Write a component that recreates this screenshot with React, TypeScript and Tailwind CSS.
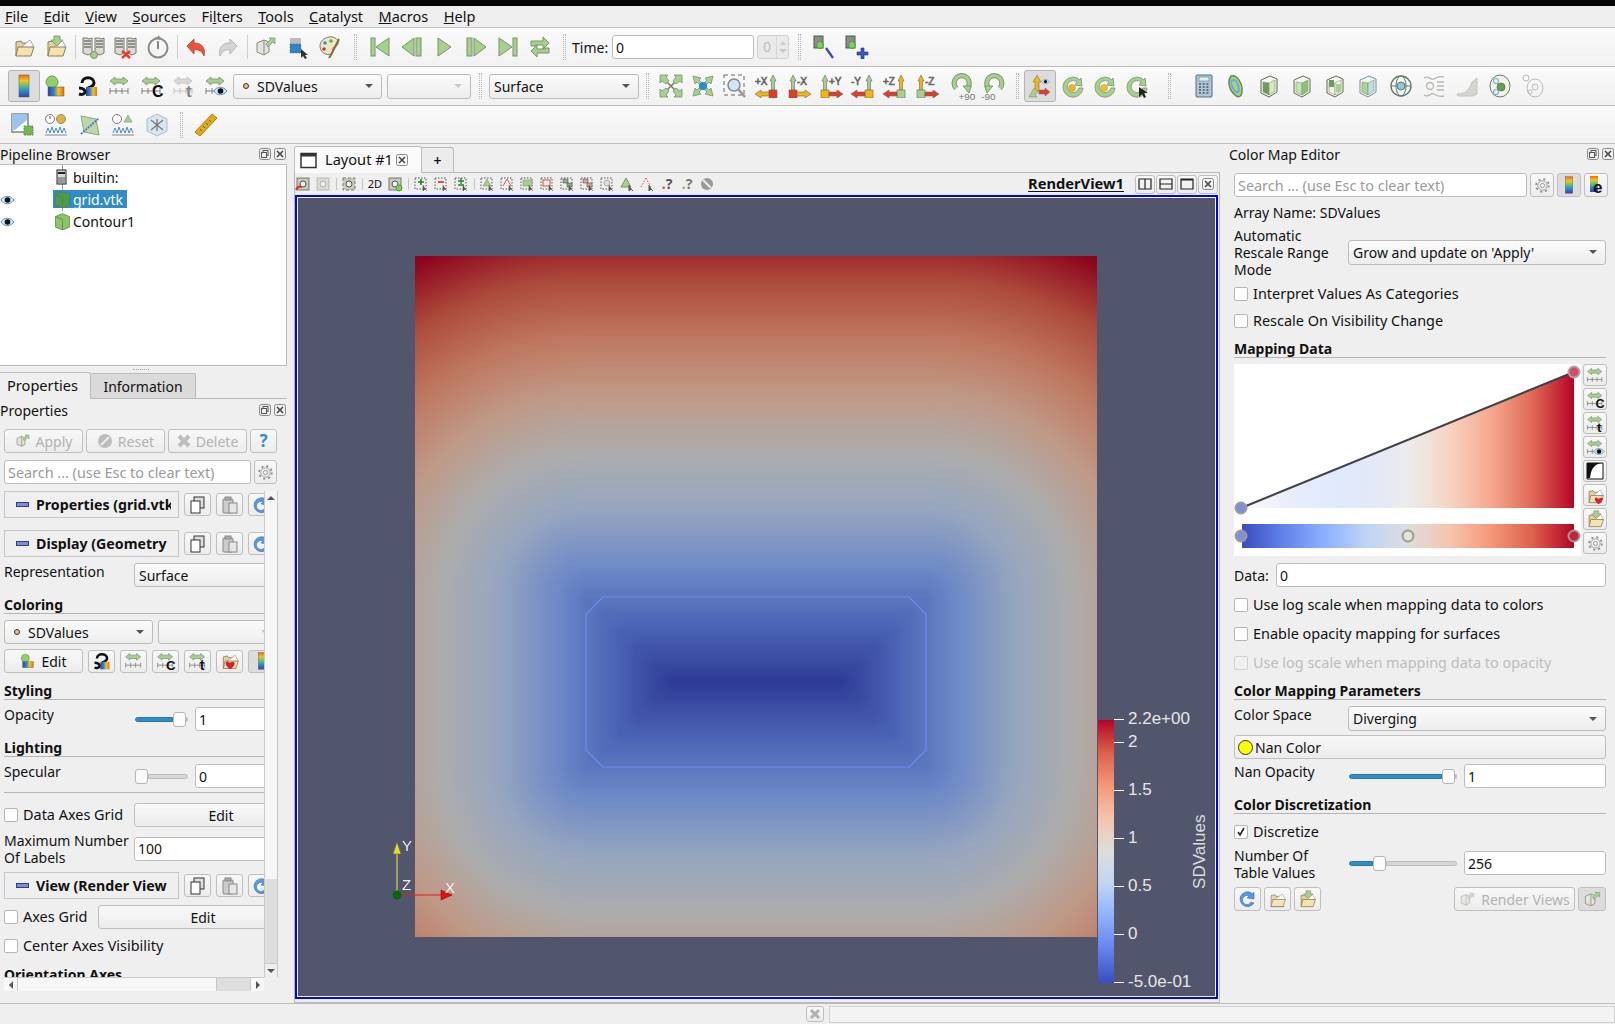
import { useEffect, useRef } from 'react'
import type { ReactNode } from 'react'

const GRN = '#a7d08f'
const GRD = '#76936a'
const ORG = '#f6b40e'
const RED = '#e23c27'
const GRY = '#8b8b82'

const coolwarm: [number, number, number, number][] = [
  [0, 59, 76, 192],
  [0.125, 98, 130, 234],
  [0.25, 141, 176, 254],
  [0.375, 192, 212, 245],
  [0.5, 221, 221, 221],
  [0.625, 245, 196, 173],
  [0.75, 244, 152, 122],
  [0.875, 221, 96, 76],
  [1, 180, 4, 38],
]

function mapColor(v: number) {
  const t = Math.min(1, Math.max(0, (v + 0.5) / 2.7))
  let i = 0
  while (i < coolwarm.length - 2 && t > coolwarm[i + 1][0]) i++
  const a = coolwarm[i]
  const b = coolwarm[i + 1]
  const f = (t - a[0]) / (b[0] - a[0])
  return [a[1] + (b[1] - a[1]) * f, a[2] + (b[2] - a[2]) * f, a[3] + (b[3] - a[3]) * f]
}

function field(x: number, y: number) {
  const qx = Math.abs(x - 2) - 1
  const qy = Math.abs(y - 1.5) - 0.5
  return Math.hypot(Math.max(qx, 0), Math.max(qy, 0)) + Math.min(Math.max(qx, qy), 0)
}

function Heatmap() {
  const ref = useRef<HTMLCanvasElement>(null)
  useEffect(() => {
    const ctx = ref.current?.getContext('2d')
    if (!ctx) return
    const w = 682
    const h = 681
    const img = ctx.createImageData(w, h)
    for (let py = 0; py < h; py++) {
      for (let px = 0; px < w; px++) {
        // bilinear over the 0.1 grid, the data is a coarse vtk grid
        const gx = (px / w) * 40
        const gy = ((h - py) / h) * 40
        const ix = Math.floor(gx)
        const iy = Math.floor(gy)
        const fx = gx - ix
        const fy = gy - iy
        const v =
          field(ix / 10, iy / 10) * (1 - fx) * (1 - fy) +
          field((ix + 1) / 10, iy / 10) * fx * (1 - fy) +
          field(ix / 10, (iy + 1) / 10) * (1 - fx) * fy +
          field((ix + 1) / 10, (iy + 1) / 10) * fx * fy
        const c = mapColor(v)
        const o = (py * w + px) * 4
        img.data[o] = c[0] * 0.78
        img.data[o + 1] = c[1] * 0.78
        img.data[o + 2] = c[2] * 0.78
        img.data[o + 3] = 255
      }
    }
    ctx.putImageData(img, 0, 0)
  }, [])
  return <canvas ref={ref} width={682} height={681} className="absolute left-[117px] top-[58px]" />
}

const Folder = () => (
  <g>
    <path d="M4 21V7l5-1 1 2h7v4" fill="#e6d29c" stroke="#8b7d57" />
    <path d="M7 14 18 5l4 7z" fill="#fff" stroke="#a9a9a0" />
    <path d="M4 21l2-9h16l-3 9z" fill="#f6e2ae" stroke="#8b7d57" />
  </g>
)
const Tower = ({ x }: { x: number }) => (
  <g stroke="#77776f" fill="#dcdcd4">
    <path d={`M${x} 3h4l2 1 3-1v15l-4 2-5-2z`} />
    <path d={`M${x + 1} 6h7M${x + 1} 9h7M${x + 1} 12h7`} fill="none" strokeWidth="1.4" />
  </g>
)
const Ruler = ({ c = '#777' }: { c?: string }) => (
  <path d="M2 17h18M2 14v6M8 14v6M14 14v6M20 14v6" fill="none" stroke={c} strokeWidth="0.9" />
)
const GreenRange = ({ c = GRN, d = GRD }: { c?: string; d?: string }) => (
  <path d="M2 7l5-4v2h8V3l5 4-5 4V9H7v2z" fill={c} stroke={d} strokeWidth="0.8" />
)
const Bar = ({ x, y, w, h }: { x: number; y: number; w: number; h: number }) => (
  <rect x={x} y={y} width={w} height={h} fill="url(#rainbow)" stroke="#555" strokeWidth="0.5" />
)
const Letter = ({ t, x, y, s = 13, c = '#111', b = true }: { t: string; x: number; y: number; s?: number; c?: string; b?: boolean }) => (
  <text x={x} y={y} fontSize={s} fontWeight={b ? 700 : 400} fill={c} fontFamily="'Liberation Sans', sans-serif">
    {t}
  </text>
)
const Eye = () => (
  <g>
    <path d="M1 6c3-5 9-5 13 0-4 5-10 5-13 0z" fill="#cfe4f5" stroke="#5b93c4" />
    <circle cx="7.5" cy="6" r="2.8" fill="#111" />
  </g>
)
const Cube = ({ f = '#a5cf8e', r = '#d3e9c6', s = '#5c6852' }: { f?: string; r?: string; s?: string }) => (
  <g>
    <path d="M4 6l9-4 7 3v13l-8 5-8-4z" fill="#f6f6f0" stroke={s} />
    <path d="M6 8l6 1v12l-6-3z" fill={f} stroke="#7a9a6a" strokeWidth="0.6" />
    <path d="M12 9l6-3v11l-6 4z" fill={r} stroke="#7a9a6a" strokeWidth="0.6" />
  </g>
)
const Rotate = ({ t }: { t: string }) => {
  const plus = t === '+90'
  const arc = plus ? 'M7 14a6.5 6.5 0 1 1 9.5 0' : 'M17 14a6.5 6.5 0 1 0-9.5 0'
  const head = plus ? 'M13 12h7l-2 6z' : 'M11 12H4l2 6z'
  return (
    <g>
      <path d={arc} fill="none" stroke={GRD} strokeWidth="4.4" />
      <path d={arc} fill="none" stroke={GRN} strokeWidth="2.8" />
      <path d={head} fill={GRN} stroke={GRD} strokeWidth="0.8" />
      <Letter t={t} x={plus ? 9 : 1} y={24} s={8.5} c="#777" b={false} />
    </g>
  )
}
const Axis = ({ label, flip, up, block, arrow }: { label: string; flip?: boolean; up: string; block: string; arrow: string }) => {
  const cx = flip ? 6 : 18
  return (
    <g stroke="#666" strokeWidth="0.6">
      <path d={`M${cx} 1l3 6h-1.5v9h-3V7H${cx - 3}z`} fill={up} />
      <rect x={cx - 4} y={16} width={8} height={8} fill={block} />
      {flip ? <path d="M10 18h8v-2l6 4-6 4v-2h-8z" fill={arrow} /> : <path d="M14 18H6v-2l-6 4 6 4v-2h8z" fill={arrow} />}
      <Letter t={label} x={flip ? 10 : 0} y={11} s={10} c="#666" b={false} />
    </g>
  )
}
const RotateRing = ({ dot }: { dot: string }) => (
  <g>
    <path d="M20 6a10 10 0 1 0 3 8h-4a6 6 0 1 1-2-6l-2 3 7 1-1-8z" fill={GRN} stroke={GRD} strokeWidth="0.8" />
    <circle cx="12" cy="14" r="3.5" fill={dot} stroke="#a88" strokeWidth="0.5" />
  </g>
)
const PlayIcon = ({ d }: { d: string }) => <path d={d} fill={GRN} stroke={GRD} />
const Gear = () => (
  <g fill="none" stroke="#8d8d8d">
    <circle cx="10" cy="10" r="5.5" strokeWidth="1" />
    <circle cx="10" cy="10" r="2.5" strokeWidth="1" />
    <circle cx="10" cy="10" r="7.5" strokeWidth="2" strokeDasharray="2.5 3.4" />
  </g>
)
const Copy = () => (
  <g stroke="#333" fill="#ddd">
    <rect x="6" y="2" width="10" height="11" />
    <rect x="3" y="6" width="9" height="12" fill="#fff" />
  </g>
)
const Paste = () => (
  <g stroke="#888" fill="#ccc">
    <rect x="3" y="4" width="10" height="14" rx="1" />
    <rect x="9" y="8" width="8" height="10" fill="#e6e6e6" />
    <rect x="5" y="2" width="6" height="3" fill="#aaa" />
  </g>
)
const Reload = () => (
  <path d="M15 5a7.5 7.5 0 1 0 1 9l-3-1a4.5 4.5 0 1 1-2-6l-2 2 7 1V3z" fill="#5a97db" stroke="#3c74b8" strokeWidth="0.6" />
)
const RenderArrow = ({ dim }: { dim?: boolean }) => (
  <g opacity={dim ? 0.6 : 1}>
    <path d="M3 8l7-3 5 2v10l-5 3-7-3z" fill="#e4e4dc" stroke="#8a8a80" />
    <path d="M10 5v15" stroke="#8a8a80" />
    <path d="M12 9l5-5-2-1h6v6l-2-2-5 5z" fill={dim ? '#bbb' : GRN} stroke={dim ? '#999' : GRD} strokeWidth="0.7" />
  </g>
)

const icons: Record<string, ReactNode> = {
  open: <Folder />,
  recent: (
    <g>
      <Folder />
      <path d="M10 1h6v4h3l-6 6-6-6h3z" fill={GRN} stroke={GRD} strokeWidth="0.8" />
    </g>
  ),
  connect: (
    <g>
      <Tower x={1} />
      <Tower x={13} />
      <circle cx="12" cy="20" r="3.5" fill={GRN} stroke={GRD} />
    </g>
  ),
  disconnect: (
    <g>
      <Tower x={1} />
      <Tower x={13} />
      <path d="M8 16l8 7M16 16l-8 7" stroke={RED} strokeWidth="2.4" />
    </g>
  ),
  timer: (
    <g fill="none" stroke={GRY}>
      <circle cx="12" cy="13" r="9.5" strokeWidth="2" />
      <path d="M12 6v8" strokeWidth="2" />
      <path d="M9 3l5 0-2-2" strokeWidth="1.5" />
    </g>
  ),
  undo: <path d="M3 11l7-7v4c7 0 12 4 10 13-2-5-5-7-10-6v4z" fill="#e8553c" stroke="#b53a28" strokeWidth="0.8" />,
  redo: <path d="M21 11l-7-7v4C7 8 2 12 4 21c2-5 5-7 10-6v4z" fill="#d5d5d5" stroke="#aaa" strokeWidth="0.8" />,
  find: <RenderArrow />,
  pick: (
    <g>
      <rect x="4" y="3" width="11" height="6" fill="#bbb" />
      <rect x="4" y="9" width="11" height="9" fill="#2e86c8" stroke="#444" strokeWidth="0.5" strokeDasharray="1.5 1.5" />
      <path d="M15 14v9l2-2 2 3 2-1-2-3h3z" fill="#333" />
    </g>
  ),
  palette: (
    <g>
      <path d="M11 2c6-1 10 3 9 7-1 3-4 2-5 4s1 4-2 6c-5 2-11-2-11-8 0-5 4-8 9-9z" fill="#efe7c9" stroke="#807a62" />
      <circle cx="7" cy="8" r="1.8" fill="#3a8fd0" />
      <circle cx="13" cy="6" r="1.8" fill="#58b058" />
      <circle cx="6" cy="14" r="1.8" fill="#d0392b" />
      <path d="M21 4 13 20l-2 3" stroke="#8a6a3a" strokeWidth="2" fill="none" />
    </g>
  ),
  first: (
    <g>
      <rect x="3" y="3" width="4" height="18" fill={GRN} stroke={GRD} />
      <PlayIcon d="M21 3v18L8 12z" />
    </g>
  ),
  prev: (
    <g>
      <PlayIcon d="M14 3v18L2 12z" />
      <rect x="16" y="3" width="5" height="18" fill={GRN} stroke={GRD} />
    </g>
  ),
  play: <PlayIcon d="M6 3v18l13-9z" />,
  next: (
    <g>
      <rect x="3" y="3" width="5" height="18" fill={GRN} stroke={GRD} />
      <PlayIcon d="M10 3v18l12-9z" />
    </g>
  ),
  last: (
    <g>
      <PlayIcon d="M3 3v18l13-9z" />
      <rect x="17" y="3" width="4" height="18" fill={GRN} stroke={GRD} />
    </g>
  ),
  loop: (
    <g fill={GRN} stroke={GRD}>
      <path d="M3 11V6h12V2l6 6-6 6v-4H7v1z" />
      <path d="M21 13v5H9v4l-6-6 6-6v4h8v-1z" />
    </g>
  ),
  cameraLink: (
    <g>
      <rect x="1" y="1" width="9" height="12" fill="#8a9080" stroke="#555" />
      <circle cx="7" cy="10" r="3.5" fill="#7ccf5a" stroke="#4a9a3a" />
      <path d="M13 13l7 10" stroke="#2f4da8" strokeWidth="2.2" />
    </g>
  ),
  cameraAdd: (
    <g>
      <rect x="1" y="1" width="9" height="12" fill="#8a9080" stroke="#555" />
      <circle cx="7" cy="10" r="3.5" fill="#7ccf5a" stroke="#4a9a3a" />
      <path d="M16 13h3v4h4v3h-4v4h-3v-4h-4v-3h4z" fill="#3358c0" stroke="#1f2f80" strokeWidth="0.6" />
    </g>
  ),
  colorbar: <Bar x={7} y={1} w={10} h={22} />,
  scalarbar: (
    <g>
      <circle cx="8" cy="8" r="6" fill="#8fd06a" stroke="#6aa04a" />
      <rect x="4" y="13" width="16" height="9" fill="url(#rainbowH)" stroke="#555" strokeWidth="0.5" />
    </g>
  ),
  separate: (
    <g>
      <path d="M6 9c0-7 12-7 12 0 0 3-3 4-6 5" fill="none" stroke="#111" strokeWidth="3" />
      <rect x="10" y="13" width="11" height="9" fill="url(#rainbowH)" />
      <path d="M3 14c4 0 6 2 6 4s-3 3-6 2" fill="none" stroke="#111" strokeWidth="3" />
    </g>
  ),
  range: (
    <g>
      <GreenRange />
      <Ruler />
    </g>
  ),
  rangeC: (
    <g>
      <GreenRange />
      <Ruler />
      <Letter t="C" x={12} y={23} s={16} />
    </g>
  ),
  rangeT: (
    <g opacity="0.7">
      <GreenRange c="#ccc" d="#aaa" />
      <Ruler c="#aaa" />
      <Letter t="t" x={14} y={23} s={17} c="#555" />
    </g>
  ),
  rangeE: (
    <g>
      <GreenRange />
      <Ruler />
      <g transform="translate(9 11)">
        <Eye />
      </g>
    </g>
  ),
  rangeCt: (
    <g>
      <GreenRange />
      <Ruler />
      <Letter t="t" x={14} y={23} s={17} />
    </g>
  ),
  fit: (
    <g>
      <path d="M4 4l16 16M20 4 4 20" stroke="#7b7b72" strokeWidth="1.6" />
      <g fill={GRN} stroke={GRD} strokeWidth="0.8">
        <path d="M1 1h8L7 3l3 4-3 3-4-3-2 2zM23 1h-8l2 2-3 4 3 3 4-3 2 2zM1 23h8l-2-2 3-4-3-3-4 3-2-2zM23 23h-8l2-2-3-4 3-3 4 3 2-2z" />
      </g>
    </g>
  ),
  center: (
    <g>
      <g fill={GRN} stroke={GRD} strokeWidth="0.8">
        <path d="M2 2l8 2-2 2 3 3-2 2-3-3-2 2zM22 2l-8 2 2 2-3 3 2 2 3-3 2 2zM2 22l8-2-2-2 3-3-2-2-3 3-2-2zM22 22l-8-2 2-2-3-3 2-2 3 3 2-2z" />
      </g>
      <circle cx="12" cy="12" r="4" fill="#2b8ad0" />
    </g>
  ),
  zoomBox: (
    <g>
      <rect x="1" y="1" width="20" height="20" fill="none" stroke="#666" strokeDasharray="4 3" />
      <circle cx="11" cy="11" r="6" fill="#cfe8f8" stroke="#888" strokeWidth="1.5" />
      <path d="M15 15l7 8" stroke="#999" strokeWidth="2.6" />
    </g>
  ),
  px: <Axis label="+X" up={GRN} block={RED} arrow={ORG} />,
  nx: <Axis label="-X" flip up={GRN} block={RED} arrow={ORG} />,
  py: <Axis label="+Y" flip up={GRN} block={ORG} arrow={RED} />,
  ny: <Axis label="-Y" up={GRN} block={ORG} arrow={RED} />,
  pz: <Axis label="+Z" up={ORG} block={GRN} arrow={RED} />,
  nz: <Axis label="-Z" flip up={ORG} block={GRN} arrow={RED} />,
  rotP: <Rotate t="+90" />,
  rotN: <Rotate t="-90" />,
  orient: (
    <g>
      <path d="M9 1l4 7h-2v9H7V8H5z" fill={ORG} stroke="#777" strokeWidth="0.6" />
      <path d="M11 16h6v-2l5 4-5 4v-2h-6z" fill={RED} stroke="#777" strokeWidth="0.6" />
      <path d="M1 23l5-9 2 2 2 2-3 2 2 3z" fill={GRN} stroke={GRD} strokeWidth="0.6" />
      <g transform="translate(13 4) scale(0.6)">
        <Eye />
      </g>
    </g>
  ),
  ringO: <RotateRing dot={ORG} />,
  ringC: <RotateRing dot="#f4c020" />,
  ringP: (
    <g>
      <path d="M20 6a10 10 0 1 0 3 8h-4a6 6 0 1 1-2-6l-2 3 7 1-1-8z" fill={GRN} stroke={GRD} strokeWidth="0.8" />
      <path d="M15 13v10l3-3 2 4 2-1-2-4h4z" fill="#222" />
    </g>
  ),
  calc: (
    <g>
      <rect x="5" y="1" width="16" height="22" rx="1" fill="#b4c6d0" stroke="#44708c" />
      <rect x="8" y="3" width="10" height="4" fill="#e4ecef" stroke="#44708c" strokeWidth="0.5" />
      <path d="M8 10h10M8 13h10M8 16h10M8 19h10" stroke="#3a5c72" strokeWidth="1.6" strokeDasharray="2 1.7" />
    </g>
  ),
  contour: (
    <g fill="none">
      <path d="M7 2c6-2 12 8 11 15 0 6-4 7-7 4C5 16 3 7 7 2z" fill={GRN} stroke="#5e8a4e" strokeWidth="1.4" />
      <path d="M8 6c4-1 7 5 7 10 0 2-2 3-3 2-3-3-6-9-4-12z" stroke="#6fa8d8" strokeWidth="1.8" />
    </g>
  ),
  clip: <Cube f="#6f9a5c" />,
  slice: <Cube f="#c5e4b4" r="#8fc077" />,
  extract: (
    <g>
      <Cube f="#f2f2ea" r="#f2f2ea" />
      <rect x="6" y="6" width="5" height="7" fill="#6a9c5a" />
      <rect x="13" y="10" width="5" height="8" fill={GRN} />
    </g>
  ),
  threshold: <Cube f="#a8d68e" r="#bcdcec" s="#6f8fa8" />,
  sphere: (
    <g fill="none" stroke="#607d68">
      <circle cx="12" cy="12" r="10" strokeWidth="1.4" />
      <ellipse cx="12" cy="12" rx="5" ry="10" />
      <path d="M2 12h20" />
      <circle cx="12" cy="12" r="4" fill="#8dc8e0" />
    </g>
  ),
  stream: (
    <g fill="none" stroke="#b8b8b0" strokeWidth="1.4">
      <path d="M2 4c5-3 7 3 10 1s6-3 10-2M2 21c5 3 7-3 10-1s6 3 10 2M15 12h7M15 16h7M15 8h7" />
      <circle cx="8" cy="12" r="3.5" />
    </g>
  ),
  warp: <path d="M2 20c8 0 12-3 15-12l5-4v16l-4 2H3z" fill="#d4d4d0" stroke="#c4c4c0" />,
  group: (
    <g fill="none" stroke="#6b7a5a">
      <ellipse cx="12" cy="12" rx="10" ry="11" fill="#f2f2ea" />
      <circle cx="8" cy="7" r="2.5" stroke="#7fb0d0" strokeWidth="1.2" />
      <circle cx="13" cy="13" r="4" fill="#58a848" />
      <circle cx="8" cy="18" r="2.5" stroke="#7fb0d0" strokeWidth="1.2" />
    </g>
  ),
  groupExt: (
    <g fill="none" stroke="#b9b9b9">
      <circle cx="5" cy="4" r="3" />
      <ellipse cx="14" cy="14" rx="8" ry="9" />
      <circle cx="14" cy="13" r="3" />
      <circle cx="9" cy="18" r="2" />
    </g>
  ),
  selectPoly: (
    <g>
      <rect x="1" y="1" width="16" height="18" fill="#fff" stroke="#7b7b6a" strokeWidth="1.4" />
      <path d="M1 1h15v6L4 17H1z" fill="#9cc4ea" />
      <rect x="13" y="13" width="9" height="9" fill="#6fb85a" stroke="#4d8a40" strokeDasharray="1.5 1" />
    </g>
  ),
  temporal: (
    <g>
      <circle cx="6" cy="6" r="4.5" fill="#fff" stroke="#777" />
      <path d="M6 3v3" stroke="#555" />
      <circle cx="17" cy="6" r="4.5" fill="#e4b13a" stroke="#888" />
      <path d="M2 20l2-5 2 5 2-6 2 6 2-5 2 5 2-6 2 6 2-5 2 5" fill="none" stroke="#4e8cc8" />
      <path d="M1 22h22" stroke="#888" />
    </g>
  ),
  plotOver: (
    <g>
      <path d="M3 3l15 3 3 16-15-3z" fill="#bed6ae" stroke="#8aa87a" />
      <path d="M3 21 21 5" stroke="#3f79c4" strokeWidth="1.8" strokeDasharray="2 1" />
    </g>
  ),
  plotGlobal: (
    <g>
      <circle cx="6" cy="6" r="4.5" fill="#fff" stroke="#777" />
      <path d="M17 2l4 7h-8z" fill={GRN} stroke={GRD} strokeWidth="0.6" />
      <path d="M2 20l2-5 2 5 2-6 2 6 2-5 2 5 2-6 2 6 2-5 2 5" fill="none" stroke="#4e8cc8" />
      <path d="M1 22h22" stroke="#888" />
    </g>
  ),
  frame: (
    <g>
      <path d="M12 1l10 5v12l-10 5-10-5V6z" fill="#d9e6f0" stroke="#a8bccc" />
      <path d="M6 7l12 10M18 7 6 17M12 6v12" stroke="#7b7b72" strokeWidth="1.3" />
    </g>
  ),
  ruler: (
    <g>
      <path d="M18 1l5 4L6 23l-5-4z" fill="#e3ac17" stroke="#a87f10" />
      <path d="M15 7l2 2M12 10l2 2M9 13l2 2M6 16l2 2" stroke="#7a5c08" />
    </g>
  ),
}

const Ico = ({ n, s = 24 }: { n: string; s?: number }) => (
  <svg width={s} height={s} viewBox="0 0 24 24" className="block shrink-0">
    {icons[n]}
  </svg>
)

const Dots = ({ w }: { w: number }) => (
  <div className="flex justify-center shrink-0" style={{ width: w }}>
    <div className="h-[26px] w-[3px] border-x border-dotted border-[#b5b5b5]" />
  </div>
)
const Sep = () => (
  <div className="flex justify-center w-[6px] shrink-0">
    <div className="h-[24px] w-px bg-[#cfcfcf]" />
  </div>
)
const Tool = ({ n, pressed, w = 'w-[32px]', s }: { n: string; pressed?: boolean; w?: string; s?: number }) => (
  <div
    className={`${w} h-[32px] shrink-0 flex items-center justify-center rounded-[3px] ${
      pressed ? 'border border-[#b4b4b4] bg-[#dcdcdc]' : ''
    }`}
  >
    <Ico n={n} s={s} />
  </div>
)
const Caret = ({ dim }: { dim?: boolean }) => (
  <div className={`w-0 h-0 border-x-[4px] border-x-transparent border-t-[4px] ${dim ? 'border-t-[#c9c9c9]' : 'border-t-[#555]'}`} />
)
const Combo = ({ children, cls, dim }: { children?: ReactNode; cls: string; dim?: boolean }) => (
  <div className={`${cls} shrink-0 flex items-center justify-between pl-[4px] pr-[8px] border border-[#bcbcbc] rounded-[3px] bg-gradient-to-b from-[#fbfbfb] to-[#ededed]`}>
    <div className="flex items-center whitespace-nowrap overflow-hidden">{children}</div>
    <Caret dim={dim} />
  </div>
)
const PointDot = () => <div className="w-[6px] h-[6px] rounded-full bg-[#f0c080] border border-[#333] ml-[5px] mr-[8px] shrink-0" />
const Field = ({ v = '', cls, hint }: { v?: string; cls: string; hint?: string }) => (
  <div className={`${cls} shrink-0 flex items-center pl-[3px] bg-white border border-[#bcbcbc] rounded-[3px] whitespace-nowrap overflow-hidden ${hint ? 'text-[#9a9a9a] text-[14.4px] pt-px' : ''}`}>
    {hint ?? v}
  </div>
)
const Btn = ({ children, cls = '', dim }: { children?: ReactNode; cls?: string; dim?: boolean }) => (
  <div className={`${cls} shrink-0 flex items-center justify-center gap-[5px] border border-[#bfbfbf] rounded-[3px] bg-gradient-to-b from-[#f8f8f8] to-[#ececec] ${dim ? 'text-[#b2b2b2]' : ''}`}>
    {children}
  </div>
)
const Heading = ({ t, cls = '' }: { t: string; cls?: string }) => (
  <div className={`${cls} h-[18px] leading-[18px] font-bold border-b border-[#b5b5b5] whitespace-nowrap`}>{t}</div>
)
const Check = ({ t, on, dim, cls = '' }: { t: string; on?: boolean; dim?: boolean; cls?: string }) => (
  <div className={`${cls} flex items-center gap-[5px] whitespace-nowrap text-[14.45px] ${dim ? 'text-[#bdbdbd]' : ''}`}>
    <div className={`w-[14px] h-[14px] flex items-center justify-center border rounded-[2px] shrink-0 ${dim ? 'bg-[#f0f0f0] border-[#d0d0d0]' : 'bg-white border-[#b5b5b5]'}`}>
      {on && (
        <svg width="10" height="10" viewBox="0 0 10 10">
          <path d="M2 5l2 3 4-7" fill="none" stroke="#222" strokeWidth="1.6" />
        </svg>
      )}
    </div>
    {t}
  </div>
)
const Slider = ({ cls, pct }: { cls: string; pct: number }) => (
  <div className={`${cls} flex items-center shrink-0`}>
    {pct > 0 && <div className="h-[5px] rounded-l-[3px] bg-[#308cc6] border border-[#2a78aa]" style={{ width: `${pct}%` }} />}
    <div className="w-[13px] h-[15px] shrink-0 rounded-[3px] bg-[#fafafa] border border-[#b5b5b5]" />
    <div className="flex-1 h-[5px] rounded-r-[3px] bg-[#d6d6d6] border border-[#bdbdbd]" />
  </div>
)
const TitleBar = ({ t, cls = '' }: { t: string; cls?: string }) => (
  <div className={`${cls} flex items-center justify-between h-[20px] shrink-0`}>
    <span>{t}</span>
    <div className="flex gap-[3px] items-center">
      <svg width="12" height="12" viewBox="0 0 12 12">
        <rect x="0.5" y="0.5" width="11" height="11" rx="2" fill="none" stroke="#888" />
        <rect x="4" y="2.5" width="5" height="5" fill="none" stroke="#555" />
        <rect x="2.5" y="4.5" width="5" height="5" fill="#eee" stroke="#555" />
      </svg>
      <CloseBox />
    </div>
  </div>
)
const CloseBox = () => (
  <svg width="12" height="12" viewBox="0 0 12 12">
    <rect x="0.5" y="0.5" width="11" height="11" rx="2" fill="none" stroke="#888" />
    <path d="M3 3l6 6M9 3l-6 6" stroke="#444" strokeWidth="1.6" />
  </svg>
)
const SectionBar = ({ t, cls = '' }: { t: string; cls?: string }) => (
  <div className={`${cls} flex items-center w-[290px]`}>
    <div className="w-[175px] h-[27px] shrink-0 flex items-center border border-[#c6c6c6] bg-[#efefef] pl-[11px] font-bold text-[14.2px]">
      <div className="w-[13px] h-[5px] bg-[#7d8fd0] border border-[#2b3e90] mr-[7px] shrink-0" />
      <span className="w-[135px] overflow-hidden whitespace-nowrap">{t}</span>
    </div>
    <div className="flex gap-[5px] ml-[5px]">
      <IconBtn>
        <svg width="20" height="20" viewBox="0 0 20 20">
          <Copy />
        </svg>
      </IconBtn>
      <IconBtn>
        <svg width="20" height="20" viewBox="0 0 20 20">
          <Paste />
        </svg>
      </IconBtn>
      <IconBtn>
        <svg width="20" height="20" viewBox="0 0 20 20">
          <Reload />
        </svg>
      </IconBtn>
    </div>
  </div>
)
const IconBtn = ({ children, cls = 'w-[27px] h-[23px]' }: { children: ReactNode; cls?: string }) => <Btn cls={cls}>{children}</Btn>

const rampH =
  'bg-[linear-gradient(to_right,#3b4cc0,#6282ea_12.5%,#8db0fe_25%,#c0d4f5_37.5%,#dddddd_50%,#f5c4ad_62.5%,#f4987a_75%,#dd604c_87.5%,#b40426)]'
const rampV =
  'bg-[linear-gradient(to_top,#3b4cc0,#6282ea_12.5%,#8db0fe_25%,#c0d4f5_37.5%,#dddddd_50%,#f5c4ad_62.5%,#f4987a_75%,#dd604c_87.5%,#b40426)]'

const menus: [string, string, string][] = [
  ['', 'F', 'ile'],
  ['', 'E', 'dit'],
  ['', 'V', 'iew'],
  ['', 'S', 'ources'],
  ['Fi', 'l', 'ters'],
  ['', 'T', 'ools'],
  ['', 'C', 'atalyst'],
  ['', 'M', 'acros'],
  ['', 'H', 'elp'],
]
const viewTools = ['first', 'second', 'sep', 'cam', 'sep', '2D', 'cam2', 'sep', 'a', 'b', 'c', 'sep', 'd', 'e', 'f', 'g', 'h', 'i', 'j', 'k', 'l', 'm', 'n', 'o']

function ViewTool({ k }: { k: string }) {
  if (k === 'sep') return <div className="w-px h-[12px] bg-[#c4c4c4] mx-[2.5px] shrink-0" />
  if (k === '2D') return <div className="w-[20px] text-center text-[11px] shrink-0">2D</div>
  const mark: Record<string, ReactNode> = {
    a: <path d="M5 6h6M8 3v6" stroke="#1a8a1a" strokeWidth="1.6" />,
    b: <path d="M5 6h6" stroke="#e02020" strokeWidth="1.6" />,
    c: <path d="M5 5h6M8 2v6M5 9h6" stroke="#1a8a1a" strokeWidth="1.3" />,
    d: <path d="M8 3l4 7H4z" fill={GRN} stroke={GRD} strokeWidth="0.6" />,
    e: <path d="M8 3l4 7M8 3l-4 7" stroke="#e04a3a" strokeWidth="0.9" fill="none" />,
    f: <rect x="4" y="4" width="9" height="6" fill={GRN} stroke={GRD} strokeWidth="0.6" />,
    g: <rect x="4" y="4" width="7" height="6" fill="none" stroke="#d05040" strokeWidth="1" />,
    h: <path d="M4 3h5v4H4zM8 7h5v4H8z" fill="#8fb07a" stroke="#556" strokeWidth="0.6" />,
    i: <path d="M4 3h5v4H4zM8 7h5v4H8z" fill="#e0a090" stroke="#556" strokeWidth="0.6" />,
    j: <circle cx="8" cy="7" r="3" fill="#ddd" stroke="#aaa" />,
  }
  if (k === 'k' || k === 'l') {
    return (
      <div className="w-[20px] flex justify-center shrink-0">
        <svg width="16" height="16" viewBox="0 0 16 16">
          {k === 'k' ? <path d="M7 2l5 9H2z" fill={GRN} stroke={GRD} /> : <path d="M7 2l5 9M7 2l-5 9" stroke="#e04a3a" strokeDasharray="1.5 1.5" fill="none" />}
          <path d="M10 9v6l2-2 2 2" fill="#555" stroke="#555" />
        </svg>
      </div>
    )
  }
  if (k === 'm' || k === 'n') {
    return (
      <div className={`w-[20px] text-center font-bold text-[14px] leading-none shrink-0 ${k === 'm' ? 'text-[#555]' : 'text-[#777]'}`}>
        <span className={k === 'm' ? 'text-[#e04a3a]' : 'text-[#8fb07a]'}>.</span>?
      </div>
    )
  }
  if (k === 'o') {
    return (
      <div className="w-[20px] flex justify-center shrink-0">
        <svg width="14" height="14" viewBox="0 0 14 14">
          <circle cx="7" cy="7" r="6" fill="#9a9a9a" />
          <path d="M3 3l8 8" stroke="#eee" strokeWidth="2" />
        </svg>
      </div>
    )
  }
  return (
    <div className="w-[20px] flex justify-center shrink-0">
      <svg width="16" height="16" viewBox="0 0 16 16">
        {k === 'first' || k === 'second' || k === 'cam' || k === 'cam2' ? (
          <g opacity={k === 'second' ? 0.45 : 1}>
            <rect x="2" y="2" width="12" height="12" fill="#c8c8bc" stroke="#7a7a70" strokeDasharray={k === 'cam' ? '3 2' : undefined} />
            <circle cx="8" cy="8" r="3" fill="#eee" stroke="#555" />
            {k === 'first' && <path d="M1 14c1-3 3-4 6-3" stroke="#d83a28" strokeWidth="2" fill="none" />}
            {k === 'cam2' && <circle cx="12" cy="12" r="3" fill="#7ccf5a" stroke="#4a9a3a" />}
          </g>
        ) : (
          <g>
            <rect x="2" y="2" width="11" height="11" fill="none" stroke="#555" strokeDasharray="1.5 1.5" />
            {mark[k]}
            <path d="M10 9v6l2-2 2 2" fill="#555" stroke="#555" strokeWidth="0.6" />
          </g>
        )}
      </svg>
    </div>
  )
}

function PropertiesPanel() {
  return (
    <div className="flex-1 flex overflow-hidden">
      <div className="w-[264px] h-[486px] overflow-hidden pl-[4px]">
        <SectionBar t="Properties (grid.vtk" />
        <SectionBar t="Display (Geometry" cls="mt-[12px]" />
        <div className="flex mt-[6px] w-[300px]">
          <div className="w-[130px] leading-[18px]">Representation</div>
          <Combo cls="w-[170px] h-[24px]">Surface</Combo>
        </div>
        <Heading t="Coloring" cls="mt-[9px] w-[300px]" />
        <div className="flex gap-[5px] mt-[6px] w-[300px]">
          <Combo cls="w-[149px] h-[24px]">
            <PointDot />
            SDValues
          </Combo>
          <Combo cls="w-[120px] h-[24px]" dim />
        </div>
        <div className="flex items-center gap-[5px] mt-[5px] w-[300px]">
          <Btn cls="w-[79px] h-[24px]">
            <Ico n="scalarbar" s={16} />
            Edit
          </Btn>
          {['separate', 'range', 'rangeC', 'rangeCt'].map((n) => (
            <IconBtn key={n}>
              <Ico n={n} s={20} />
            </IconBtn>
          ))}
          <IconBtn>
            <svg width="20" height="20" viewBox="0 0 24 24">
              <Folder />
              <path d="M12 22c-8-6-5-11-2-9 1 1 2 1 2 1s2-1 3-1c3-1 5 4-3 9z" fill="#d8202a" />
            </svg>
          </IconBtn>
          <Btn cls="w-[27px] h-[23px] bg-none bg-[#dcdcdc]">
            <Ico n="colorbar" s={18} />
          </Btn>
        </div>
        <Heading t="Styling" cls="mt-[9px] w-[300px]" />
        <div className="flex mt-[7px] w-[300px]">
          <div className="w-[131px] leading-[15px]">Opacity</div>
          <Slider cls="w-[53px] h-[24px]" pct={75} />
          <Field v="1" cls="w-[100px] h-[24px] ml-[7px]" />
        </div>
        <Heading t="Lighting" cls="mt-[8px] w-[300px]" />
        <div className="flex mt-[7px] w-[300px]">
          <div className="w-[131px] leading-[15px]">Specular</div>
          <Slider cls="w-[53px] h-[24px]" pct={0} />
          <Field v="0" cls="w-[100px] h-[24px] ml-[7px]" />
        </div>
        <div className="h-px w-[300px] bg-[#b5b5b5] mt-[4px]" />
        <div className="flex items-center mt-[10px] w-[304px]">
          <Check t="Data Axes Grid" cls="w-[130px]" />
          <Btn cls="w-[174px] h-[24px]">Edit</Btn>
        </div>
        <div className="flex items-center mt-[5px] w-[300px] h-[33px]">
          <div className="w-[130px] leading-[17px]">
            Maximum Number
            <br />
            Of Labels
          </div>
          <Field v="100" cls="w-[170px] h-[24px]" />
        </div>
        <SectionBar t="View (Render View" cls="mt-[7px]" />
        <div className="flex items-center mt-[6px] w-[304px]">
          <Check t="Axes Grid" cls="w-[94px]" />
          <Btn cls="w-[210px] h-[24px]">Edit</Btn>
        </div>
        <Check t="Center Axes Visibility" cls="mt-[6px]" />
        <div className="font-bold leading-[18px] mt-[9px] whitespace-nowrap">Orientation Axes</div>
      </div>
      <div className="w-[14px] h-[486px] shrink-0 flex flex-col bg-[#dedede] border-x border-[#c8c8c8]">
        <div className="h-[14px] flex items-center justify-center bg-[#f4f4f4] rotate-180">
          <Caret />
        </div>
        <div className="h-[374px] bg-[#f6f6f6]" />
        <div className="flex-1" />
        <div className="h-[14px] flex items-center justify-center bg-[#efefef] border-t border-[#c8c8c8]">
          <Caret />
        </div>
      </div>
    </div>
  )
}

function LeftPanel() {
  return (
    <div className="w-[288px] shrink-0 flex flex-col">
      <TitleBar t="Pipeline Browser" cls="pr-[2px]" />
      <div className="relative h-[202px] w-[287px] bg-white border border-l-0 border-[#bcbcbc] pt-[1px]">
        <div className="absolute left-[62px] top-0 h-[46px] w-px bg-[#999]" />
        <div className="flex items-center h-[22px] relative pl-[52px]">
          <svg width="18" height="18" viewBox="0 0 18 18" className="block">
            <rect x="5" y="2" width="9" height="14" fill="#d9d9d9" stroke="#222" />
            <path d="M6 5h7" stroke="#222" strokeWidth="2" />
            <rect x="6" y="9" width="7" height="6" fill="#999" />
          </svg>
          <span className="ml-[3px]">builtin:</span>
        </div>
        {['grid.vtk', 'Contour1'].map((t, i) => (
          <div key={t} className="flex items-center h-[22px] relative">
            <svg width="15" height="12" viewBox="0 0 15 12" className="block absolute left-0 top-[6px]">
              <Eye />
            </svg>
            <div className={`flex items-center h-[18px] ml-[53px] pl-[1px] pr-[4px] ${i === 0 ? 'bg-[#308cc6] text-white' : ''}`}>
              <svg width="17" height="17" viewBox="0 0 24 24" className="block mr-[2px]">
                <path d="M2 5l10-4 10 4v15l-10 4-10-4z" fill={i === 0 ? '#4b9c4b' : '#8cc46a'} stroke="#5c7a4a" />
                <path d="M2 5l10 4v15" fill="none" stroke="#5c7a4a" />
              </svg>
              {t}
            </div>
          </div>
        ))}
      </div>
      <div className="h-[6px] flex items-center justify-center pr-[6px]">
        <div className="w-[16px] border-t border-dotted border-[#aaa]" />
      </div>
      <div className="flex items-end h-[27px] border-b border-[#b9b9b9] w-[287px]">
        <div className="w-[91px] h-[27px] -mb-px flex items-center pl-[7px] bg-[#efefef] border border-b-0 border-l-0 border-[#bcbcbc] rounded-tr-[3px] text-[14.6px]">Properties</div>
        <div className="w-[105px] h-[25px] flex items-center justify-center bg-[#dadada] border border-b-0 border-l-0 border-[#bcbcbc] rounded-t-[2px]">Information</div>
      </div>
      <TitleBar t="Properties" cls="pr-[2px] mt-[1px]" />
      <div className="flex gap-[3px] pl-[4px] mt-[9px]">
        <Btn dim cls="w-[79px] h-[24px]">
          <Ico n="find" s={16} />
          Apply
        </Btn>
        <Btn dim cls="w-[79px] h-[24px]">
          <svg width="16" height="16" viewBox="0 0 16 16">
            <circle cx="8" cy="8" r="7" fill="#bdbdbd" />
            <path d="M4 12l8-8" stroke="#eee" strokeWidth="2" />
          </svg>
          Reset
        </Btn>
        <Btn dim cls="w-[79px] h-[24px]">
          <svg width="14" height="14" viewBox="0 0 14 14">
            <path d="M2 2l10 10M12 2 2 12" stroke="#bdbdbd" strokeWidth="4" />
          </svg>
          Delete
        </Btn>
        <Btn cls="w-[27px] h-[24px] font-bold text-[17px] text-[#2f8fdb]">?</Btn>
      </div>
      <div className="flex gap-[3px] pl-[4px] mt-[7px]">
        <Field cls="w-[247px] h-[24px]" hint="Search ... (use Esc to clear text)" />
        <Btn cls="w-[23px] h-[24px]">
          <svg width="17" height="17" viewBox="0 0 20 20">
            <Gear />
          </svg>
        </Btn>
      </div>
      <div className="mt-[7px]">
        <PropertiesPanel />
      </div>
      <div className="flex h-[14px] ml-[4px] w-[260px] bg-[#f7f7f7] border-t border-[#c8c8c8] items-center">
        <div className="w-[14px] flex justify-center border-r border-[#c8c8c8] h-full items-center">
          <div className="w-0 h-0 border-y-[4px] border-y-transparent border-r-[4px] border-r-[#555]" />
        </div>
        <div className="flex-1" />
        <div className="w-[34px] h-full bg-[#dedede] border-l border-[#c8c8c8]" />
        <div className="w-[14px] flex justify-center border-l border-[#c8c8c8] h-full items-center">
          <div className="w-0 h-0 border-y-[4px] border-y-transparent border-l-[4px] border-l-[#555]" />
        </div>
      </div>
    </div>
  )
}

function RenderView() {
  const ticks: [string, number][] = [
    ['2.2e+00', 522],
    ['2', 545],
    ['1.5', 593],
    ['1', 641],
    ['0.5', 689],
    ['0', 737],
    ['-5.0e-01', 785],
  ]
  return (
    <div className="relative mr-px h-[804px] border-2 border-[#0000ff] bg-white p-px">
      <div className="relative w-full h-full bg-[#52566c] overflow-hidden">
        <Heatmap />
        <svg width="344" height="172" className="absolute left-[287px] top-[398px]" viewBox="0 0 344 172">
          <path d="M18 1h306l17 17v136l-17 17H18L1 154V18z" fill="none" stroke="#6c8cf0" strokeWidth="1.2" />
        </svg>
        <svg width="90" height="80" className="absolute left-[85px] top-[635px]" viewBox="0 0 90 80" fontFamily="'Liberation Sans', sans-serif">
          <path d="M14 62V18" stroke="#d4d44a" strokeWidth="1.2" />
          <path d="M14 9l4 12h-8z" fill="#e0e020" stroke="#666" strokeWidth="0.6" />
          <path d="M14 62h55" stroke="#e81818" strokeWidth="1.2" />
          <path d="M69 62l-11-5v10z" fill="#ee0b0b" stroke="#801010" strokeWidth="0.6" />
          <circle cx="14" cy="62" r="4.5" fill="#0a660a" />
          <text x="19" y="18" fontSize="15" fill="#eee">Y</text>
          <text x="19" y="57" fontSize="15" fill="#eee">Z</text>
          <text x="62" y="60" fontSize="15" fill="#eee">X</text>
        </svg>
        <div className={`absolute left-[800px] top-[522px] w-[16px] h-[263px] ${rampV}`} />
        {ticks.map(([t, y]) => (
          <div key={t} className="absolute left-[816px] flex items-center h-[20px] text-[#e6e6e6] text-[17px] font-['Liberation_Sans',sans-serif] whitespace-nowrap" style={{ top: y - 11 }}>
            <div className="w-[10px] h-px bg-white mr-[4px]" />
            {t}
          </div>
        ))}
        <div className="absolute left-[862px] top-[641px] w-[80px] text-[#dcdcdc] text-[17px] font-['Liberation_Sans',sans-serif] text-center whitespace-nowrap -rotate-90">SDValues</div>
      </div>
    </div>
  )
}

function CenterPanel() {
  return (
    <div className="w-[926px] shrink-0 flex flex-col ml-[6px]">
      <div className="flex items-end h-[28px] pt-[2px]">
        <div className="w-[128px] h-[27px] -mb-px z-10 flex items-center pl-[5px] gap-[3px] bg-[#fafafa] border border-b-0 border-[#bcbcbc] rounded-t-[3px] whitespace-nowrap">
          <svg width="17" height="17" viewBox="0 0 17 17" className="block">
            <rect x="1" y="1.5" width="15" height="14" fill="#fff" stroke="#333" strokeWidth="1.5" />
            <rect x="1" y="1.5" width="15" height="3" fill="#333" />
          </svg>
          <span className="ml-[5px] text-[14.6px]">Layout #1</span>
          <CloseBox />
        </div>
        <div className="w-[32px] h-[25px] flex items-center justify-center bg-[#ececec] border border-b-0 border-l-0 border-[#bcbcbc] rounded-tr-[3px] font-semibold">+</div>
      </div>
      <div className="flex-1 border border-[#b9b9b9]">
        <div className="flex items-center h-[22px] -ml-[2px]">
          {viewTools.map((k, i) => (
            <ViewTool key={i} k={k} />
          ))}
          <div className="ml-auto -mt-px font-bold text-[14.7px] underline underline-offset-2 mr-[11px] whitespace-nowrap">RenderView1</div>
          <div className="flex gap-px mr-px">
            {['M1 2h12v10H1zM7 2v10', 'M1 2h12v10H1zM1 7h12', 'M1 2h12v10H1zM1 3h12'].map((d) => (
              <Btn key={d} cls="w-[20px] h-[19px]">
                <svg width="14" height="14" viewBox="0 0 14 14">
                  <path d={d} fill="none" stroke="#222" strokeWidth="1.2" />
                </svg>
              </Btn>
            ))}
            <Btn cls="w-[20px] h-[19px]">
              <CloseBox />
            </Btn>
          </div>
        </div>
        <RenderView />
      </div>
    </div>
  )
}

function TransferChart() {
  return (
    <div className="relative w-[347px] h-[192px] bg-white shrink-0">
      <svg width="347" height="192" viewBox="0 0 347 192" className="absolute inset-0">
        <defs>
          <linearGradient id="tf" x1="0" x2="1" y1="0" y2="0">
            <stop offset="0" stopColor="#3b4cc0" stopOpacity="0" />
            <stop offset="0.25" stopColor="#8db0fe" stopOpacity="0.25" />
            <stop offset="0.5" stopColor="#dddddd" stopOpacity="0.55" />
            <stop offset="0.625" stopColor="#f5c4ad" stopOpacity="0.75" />
            <stop offset="0.75" stopColor="#f4987a" stopOpacity="0.85" />
            <stop offset="0.875" stopColor="#dd604c" stopOpacity="0.95" />
            <stop offset="1" stopColor="#b40426" stopOpacity="1" />
          </linearGradient>
        </defs>
        <path d="M7 144 340 8v136z" fill="url(#tf)" />
        <path d="M7 144 340 8" stroke="#3f4248" strokeWidth="2" />
        <circle cx="7" cy="144" r="5.5" fill="#7f8fdb" stroke="#9c9c90" strokeWidth="2" />
        <circle cx="340" cy="8" r="5.5" fill="#d84a66" stroke="#a8a8a0" strokeWidth="2" />
      </svg>
      <div className={`absolute left-[8px] top-[160px] w-[332px] h-[24px] ${rampH}`} />
      <svg width="347" height="192" viewBox="0 0 347 192" className="absolute inset-0">
        <circle cx="7" cy="172" r="5.5" fill="#7f8fdb" stroke="#9c9c90" strokeWidth="2" />
        <circle cx="174" cy="172" r="5.5" fill="#e4e4d8" stroke="#9c9c90" strokeWidth="2" />
        <circle cx="340" cy="172" r="5.5" fill="#c42040" stroke="#9c9c90" strokeWidth="2" />
      </svg>
    </div>
  )
}

function RightPanel() {
  const chartBtns = ['range', 'rangeC', 'rangeCt', 'rangeE']
  return (
    <div className="w-[387px] shrink-0 flex flex-col ml-[8px]">
      <TitleBar t="Color Map Editor" cls="pl-px pr-[1px]" />
      <div className="pl-[6px] w-[378px]">
        <div className="flex gap-[3px] mt-[9px]">
          <Field cls="w-[293px] h-[24px]" hint="Search ... (use Esc to clear text)" />
          <Btn cls="w-[24px] h-[24px]">
            <svg width="17" height="17" viewBox="0 0 20 20">
              <Gear />
            </svg>
          </Btn>
          <Btn cls="w-[24px] h-[24px] bg-none bg-[#dcdcdc]">
            <Ico n="colorbar" s={18} />
          </Btn>
          <Btn cls="w-[24px] h-[24px]">
            <svg width="20" height="20" viewBox="0 0 20 20">
              <rect x="4" y="1" width="8" height="16" fill="url(#rainbow)" />
              <text x="7" y="18" fontSize="17" fontWeight="700" fill="#111" fontFamily="'Liberation Sans', sans-serif">e</text>
            </svg>
          </Btn>
        </div>
        <div className="mt-[7px] leading-[18px]">Array Name: SDValues</div>
        <div className="flex items-center mt-[5px] h-[50px]">
          <div className="w-[114px] leading-[17px]">
            Automatic
            <br />
            Rescale Range
            <br />
            Mode
          </div>
          <Combo cls="w-[258px] h-[25px]">Grow and update on &#39;Apply&#39;</Combo>
        </div>
        <Check t="Interpret Values As Categories" cls="mt-[7px] h-[20px]" />
        <Check t="Rescale On Visibility Change" cls="mt-[7px] h-[20px]" />
        <Heading t="Mapping Data" cls="mt-[9px]" />
        <div className="flex gap-px mt-[6px]">
          <TransferChart />
          <div className="flex flex-col gap-[2px] ml-px">
            {chartBtns.map((n) => (
              <Btn key={n} cls="w-[24px] h-[22px]">
                <Ico n={n} s={19} />
              </Btn>
            ))}
            <Btn cls="w-[24px] h-[22px]">
              <svg width="18" height="18" viewBox="0 0 18 18">
                <path d="M1 1h16v16H1z" fill="#fff" stroke="#111" />
                <path d="M1 1h15C9 2 5 6 4 16H1z" fill="#111" />
              </svg>
            </Btn>
            <Btn cls="w-[24px] h-[22px]">
              <svg width="19" height="19" viewBox="0 0 24 24">
                <Folder />
                <path d="M16 23c-7-5-5-10-2-8 1 1 2 1 2 1s2-1 3-1c3-1 4 3-3 8z" fill="#d8202a" />
              </svg>
            </Btn>
            <Btn cls="w-[24px] h-[22px]">
              <Ico n="recent" s={19} />
            </Btn>
            <Btn cls="w-[24px] h-[22px]">
              <svg width="17" height="17" viewBox="0 0 20 20">
                <Gear />
              </svg>
            </Btn>
          </div>
        </div>
        <div className="flex items-center mt-[7px]">
          <span className="w-[42px]">Data:</span>
          <Field v="0" cls="w-[330px] h-[24px]" />
        </div>
        <Check t="Use log scale when mapping data to colors" cls="mt-[8px] h-[20px]" />
        <Check t="Enable opacity mapping for surfaces" cls="mt-[9px] h-[20px]" />
        <Check t="Use log scale when mapping data to opacity" dim cls="mt-[9px] h-[20px]" />
        <Heading t="Color Mapping Parameters" cls="mt-[9px]" />
        <div className="flex mt-[6px]">
          <div className="w-[114px] leading-[18px]">Color Space</div>
          <Combo cls="w-[258px] h-[25px]">Diverging</Combo>
        </div>
        <Btn cls="w-[372px] h-[24px] mt-[4px] !justify-start pl-[3px] !gap-[2px]">
          <div className="w-[15px] h-[15px] rounded-full bg-[#ffff00] border border-[#333]" />
          Nan Color
        </Btn>
        <div className="flex mt-[5px]">
          <div className="w-[115px] leading-[15px]">Nan Opacity</div>
          <Slider cls="w-[108px] h-[24px]" pct={88} />
          <Field v="1" cls="w-[142px] h-[24px] ml-[7px]" />
        </div>
        <Heading t="Color Discretization" cls="mt-[8px]" />
        <Check t="Discretize" on cls="mt-[8px] h-[20px]" />
        <div className="flex items-center mt-[4px] h-[34px]">
          <div className="w-[115px] leading-[17px] mt-[1px]">
            Number Of
            <br />
            Table Values
          </div>
          <Slider cls="w-[108px] h-[24px]" pct={22} />
          <Field v="256" cls="w-[142px] h-[24px] ml-[7px]" />
        </div>
        <div className="flex items-center gap-[3px] mt-[7px]">
          <Btn cls="w-[27px] h-[24px]">
            <svg width="20" height="20" viewBox="0 0 20 20">
              <Reload />
            </svg>
          </Btn>
          <Btn cls="w-[27px] h-[24px]">
            <svg width="19" height="19" viewBox="0 0 24 24" opacity="0.85">
              <Folder />
              <path d="M3 21h18" stroke="#777" />
            </svg>
          </Btn>
          <Btn cls="w-[27px] h-[24px]">
            <Ico n="recent" s={19} />
          </Btn>
          <Btn dim cls="w-[121px] h-[24px] ml-auto">
            <svg width="17" height="17" viewBox="0 0 24 24">
              <RenderArrow dim />
            </svg>
            Render Views
          </Btn>
          <Btn cls="w-[28px] h-[24px] bg-none bg-[#dcdcdc]">
            <svg width="19" height="19" viewBox="0 0 24 24">
              <RenderArrow />
            </svg>
          </Btn>
        </div>
      </div>
    </div>
  )
}

export default function App() {
  return (
    <div className="w-[1615px] h-[1024px] overflow-hidden flex flex-col bg-[#efefef] text-[14px] text-[#111] font-['Noto_Sans',sans-serif]">
      <svg width="0" height="0" className="absolute">
        <defs>
          <linearGradient id="rainbow" x1="0" x2="0" y1="0" y2="1">
            <stop offset="0" stopColor="#f06a10" />
            <stop offset="0.25" stopColor="#f4c418" />
            <stop offset="0.5" stopColor="#5cc07a" />
            <stop offset="0.75" stopColor="#1e88d8" />
            <stop offset="1" stopColor="#4a3a9a" />
          </linearGradient>
          <linearGradient id="rainbowH" x1="0" x2="1" y1="0" y2="0">
            <stop offset="0" stopColor="#4a3a9a" />
            <stop offset="0.35" stopColor="#1e88d8" />
            <stop offset="0.65" stopColor="#f4c418" />
            <stop offset="1" stopColor="#f06a10" />
          </linearGradient>
        </defs>
      </svg>
      <div className="h-[6px] bg-[#060606] shrink-0" />
      <div className="h-[22px] shrink-0 flex items-center pl-[5px] gap-[15.5px] border-b border-[#c4c4c4] text-[14.5px]">
        {menus.map(([a, u, b]) => (
          <span key={u + b}>
            {a}
            <span className="underline">{u}</span>
            {b}
          </span>
        ))}
      </div>
      <div className="h-[39px] shrink-0 flex items-center pl-[8px] border-b border-[#bdbdbd] bg-gradient-to-b from-[#fafafa] to-[#f1f1f1]">
        <Tool n="open" />
        <Tool n="recent" />
        <Sep />
        <Tool n="connect" />
        <Tool n="disconnect" />
        <Tool n="timer" />
        <Sep />
        <Tool n="undo" />
        <Tool n="redo" />
        <Sep />
        <Tool n="find" />
        <Tool n="pick" />
        <Tool n="palette" />
        <Dots w={18} />
        <Tool n="first" />
        <Tool n="prev" />
        <Tool n="play" />
        <Tool n="next" />
        <Tool n="last" />
        <Tool n="loop" />
        <Dots w={16} />
        <span className="w-[40px]">Time:</span>
        <Field v="0" cls="w-[142px] h-[24px]" />
        <div className="w-[32px] h-[24px] ml-[3px] flex border border-[#cfcfcf] rounded-[3px] bg-[#eaeaea] text-[#bdbdbd] shrink-0">
          <span className="flex-1 text-center">0</span>
          <div className="w-[12px] flex flex-col items-center justify-center gap-[4px] border-l border-[#d8d8d8]">
            <div className="w-0 h-0 border-x-[3px] border-x-transparent border-b-[4px] border-b-[#ccc]" />
            <Caret dim />
          </div>
        </div>
        <Dots w={20} />
        <Tool n="cameraLink" />
        <Tool n="cameraAdd" />
      </div>
      <div className="h-[39px] shrink-0 flex items-center pl-[8px] border-b border-[#bdbdbd] bg-gradient-to-b from-[#fafafa] to-[#f1f1f1]">
        <Tool n="colorbar" pressed />
        <Tool n="scalarbar" />
        <Tool n="separate" />
        <Tool n="range" />
        <Tool n="rangeC" />
        <Tool n="rangeT" />
        <Tool n="rangeE" />
        <Combo cls="w-[149px] h-[25px] ml-px">
          <PointDot />
          SDValues
        </Combo>
        <Combo cls="w-[84px] h-[25px] ml-[5px]" dim />
        <Dots w={18} />
        <Combo cls="w-[150px] h-[25px]">Surface</Combo>
        <Dots w={16} />
        {['fit', 'center', 'zoomBox', 'px', 'nx', 'py', 'ny', 'pz', 'nz'].map((n) => (
          <Tool key={n} n={n} />
        ))}
        <div className="w-[3px]" />
        <Tool n="rotP" s={28} />
        <Tool n="rotN" s={28} />
        <Dots w={14} />
        <Tool n="orient" pressed />
        <Tool n="ringO" />
        <Tool n="ringC" />
        <Tool n="ringP" />
        <Dots w={34} />
        {['calc', 'contour', 'clip', 'slice', 'extract', 'threshold', 'sphere', 'stream', 'warp', 'group', 'groupExt'].map((n) => (
          <Tool key={n} n={n} w="w-[33px]" />
        ))}
      </div>
      <div className="h-[38px] shrink-0 flex items-center pl-[6px] border-b border-[#bdbdbd] bg-gradient-to-b from-[#fafafa] to-[#f1f1f1]">
        {['selectPoly', 'temporal', 'plotOver', 'plotGlobal', 'frame'].map((n) => (
          <Tool key={n} n={n} w="w-[33.5px]" />
        ))}
        <Dots w={16} />
        <Tool n="ruler" />
      </div>
      <div className="flex h-[859px] shrink-0">
        <LeftPanel />
        <CenterPanel />
        <RightPanel />
      </div>
      <div className="h-[21px] flex items-center border-t border-[#bcbcbc] pl-[806px] gap-[5px]">
        <Btn cls="w-[18px] h-[16px]">
          <svg width="12" height="12" viewBox="0 0 12 12">
            <path d="M2 2l8 8M10 2l-8 8" stroke="#b0b0b0" strokeWidth="3" />
          </svg>
        </Btn>
        <div className="flex-1 h-[17px] border border-[#d0d0d0] bg-[#f3f3f3]" />
      </div>
    </div>
  )
}
